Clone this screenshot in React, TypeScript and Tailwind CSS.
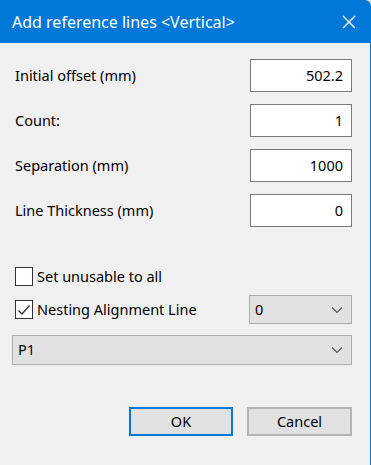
import { useState } from 'react';

const fields = [
  { label: 'Initial offset (mm)', value: '502.2' },
  { label: 'Count:', value: '1' },
  { label: 'Separation (mm)', value: '1000' },
  { label: 'Line Thickness (mm)', value: '0' },
];

function Chevron() {
  return (
    <svg width="12" height="8" viewBox="0 0 12 8" fill="none" className="shrink-0">
      <path d="M1 1.5 L6 6.5 L11 1.5" stroke="#555" strokeWidth="1.2" />
    </svg>
  );
}

function Checkbox({ checked, label }: { checked: boolean; label: string }) {
  return (
    <label className="flex items-center gap-[4px] text-[14.5px] text-black pl-[3px]">
      <span className="w-[18px] h-[19px] border border-[#333] bg-white flex items-center justify-center">
        {checked && (
          <svg width="14" height="12" viewBox="0 0 14 12" fill="none">
            <path d="M1.5 6.5 L5 10 L12.5 1.5" stroke="#333" strokeWidth="1.4" />
          </svg>
        )}
      </span>
      {label}
    </label>
  );
}

export default function App() {
  const [values] = useState(fields);

  return (
    <div className="w-[371px] h-[465px] flex flex-col bg-[#f0f0f0] font-['Segoe_UI','Noto_Sans','Open_Sans',sans-serif]">
      {/* Title bar */}
      <div className="h-[43px] shrink-0 bg-[#0078d7] rounded-tr-[6px] flex items-center justify-between pl-[12px] pr-[15px]">
        <span className="text-white text-[16px]">Add reference lines &lt;Vertical&gt;</span>
        <svg width="14" height="14" viewBox="0 0 14 14" fill="none">
          <path d="M1 1 L13 13 M13 1 L1 13" stroke="#fff" strokeWidth="1.4" />
        </svg>
      </div>

      {/* Body */}
      <div className="flex-1 flex flex-col pl-[12px] pr-[18px] border-r border-[#0078d7]">
        <div className="flex flex-col gap-[12px] pt-[16px]">
          {values.map((f) => (
            <div key={f.label} className="flex items-center justify-between h-[33px]">
              <span className="pl-[3px] text-[14.5px] text-black">{f.label}</span>
              <div className="w-[102px] h-[33px] bg-white border border-[#7a7a7a] flex items-center justify-end pr-[8px] text-[14.5px] text-black">
                {f.value}
              </div>
            </div>
          ))}
        </div>

        <div className="mt-[40px] h-[19px] flex items-center">
          <Checkbox checked={false} label="Set unusable to all" />
        </div>

        <div className="mt-[9px] h-[29px] flex items-center justify-between">
          <Checkbox checked label="Nesting Alignment Line" />
          <div className="w-[103px] h-[29px] bg-[#e1e1e1] border border-[#adadad] flex items-center justify-between pl-[5px] pr-[8px] text-[14.5px] text-black">
            <span>0</span>
            <Chevron />
          </div>
        </div>

        <div className="mt-[11px] h-[30px] bg-[#e1e1e1] border border-[#adadad] flex items-center justify-between pl-[5px] pr-[8px] text-[14.5px] text-black">
          <span>P1</span>
          <Chevron />
        </div>

        <div className="mt-[42px] flex justify-end gap-[14px]">
          <button className="w-[104px] h-[29px] bg-[#e1e1e1] border-2 border-[#0078d7] text-[14.5px] text-black">
            OK
          </button>
          <button className="w-[105px] h-[29px] bg-[#e1e1e1] border-2 border-[#b4b4b4] text-[14.5px] text-black">
            Cancel
          </button>
        </div>
      </div>
    </div>
  );
}
